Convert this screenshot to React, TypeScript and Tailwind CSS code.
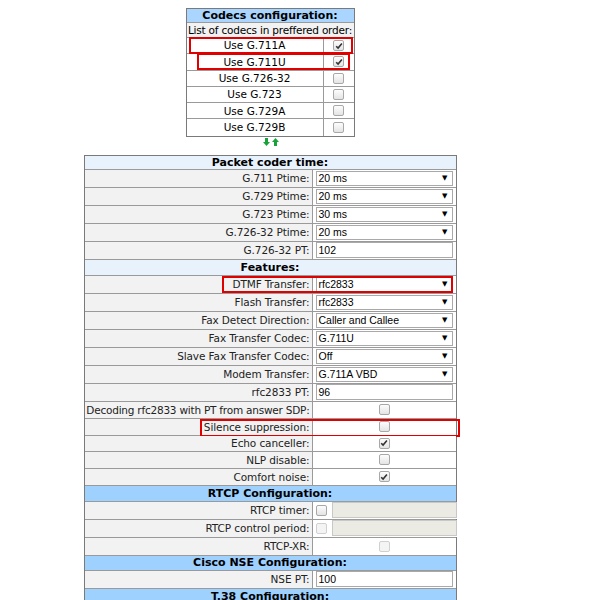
import React from "react";

const font = "font-['DejaVu_Sans','Liberation_Sans',sans-serif]";

function Check({ on, disabled }: { on?: boolean; disabled?: boolean }) {
  return (
    <span
      className={`inline-flex h-[11px] w-[11px] items-center justify-center rounded-[2px] border ${
        disabled ? "border-[#d0d0d0] bg-[#f4f4f4]" : "border-[#a8a8a8] bg-gradient-to-b from-[#fdfdfd] to-[#e4e4e4]"
      }`}
    >
      {on && (
        <svg width="8" height="8" viewBox="0 0 8 8">
          <path d="M1.2 4.2 L3.1 6.1 L6.9 1.6" stroke="#333" strokeWidth="1.6" fill="none" />
        </svg>
      )}
    </span>
  );
}

function Select({ value }: { value: string }) {
  return (
    <div className="flex h-[15px] w-[137px] items-center justify-between border border-[#a9a9a9] bg-white pl-[2px] pr-[4px] leading-none text-black">
      <span className="font-['Liberation_Sans',sans-serif] text-[10.5px]">{value}</span>
      <span className="text-[7px]">▼</span>
    </div>
  );
}

function TextBox({ value, disabled }: { value?: string; disabled?: boolean }) {
  return (
    <div
      className={`flex h-[16px] items-center border pl-[2px] font-['Liberation_Sans',sans-serif] text-[10.5px] leading-none ${
        disabled ? "w-[125px] border-[#c8c8c8] bg-[#ebebe4]" : "w-[137px] border-[#a9a9a9] bg-white"
      }`}
    >
      {value}
    </div>
  );
}

type Row =
  | { kind: "head"; text: string; dark?: boolean; h: string }
  | { kind: "select"; label: string; value: string; box?: string }
  | { kind: "text"; label: string; value: string }
  | { kind: "check"; label: string; on?: boolean; disabled?: boolean; box?: string; h?: string; tight?: boolean }
  | { kind: "checktext"; label: string; disabled?: boolean };

const rows: Row[] = [
  { kind: "head", text: "Packet coder time:", h: "h-[14px]" },
  { kind: "select", label: "G.711 Ptime:", value: "20 ms" },
  { kind: "select", label: "G.729 Ptime:", value: "20 ms" },
  { kind: "select", label: "G.723 Ptime:", value: "30 ms" },
  { kind: "select", label: "G.726-32 Ptime:", value: "20 ms" },
  { kind: "text", label: "G.726-32 PT:", value: "102" },
  { kind: "head", text: "Features:", h: "h-[16px]" },
  { kind: "select", label: "DTMF Transfer:", value: "rfc2833", box: "dtmf" },
  { kind: "select", label: "Flash Transfer:", value: "rfc2833" },
  { kind: "select", label: "Fax Detect Direction:", value: "Caller and Callee" },
  { kind: "select", label: "Fax Transfer Codec:", value: "G.711U" },
  { kind: "select", label: "Slave Fax Transfer Codec:", value: "Off" },
  { kind: "select", label: "Modem Transfer:", value: "G.711A VBD" },
  { kind: "text", label: "rfc2833 PT:", value: "96" },
  { kind: "check", label: "Decoding rfc2833 with PT from answer SDP:", tight: true },
  { kind: "check", label: "Silence suppression:", box: "silence" },
  { kind: "check", label: "Echo canceller:", on: true, h: "h-[16px]" },
  { kind: "check", label: "NLP disable:" },
  { kind: "check", label: "Comfort noise:", on: true },
  { kind: "head", text: "RTCP Configuration:", dark: true, h: "h-[16px]" },
  { kind: "checktext", label: "RTCP timer:" },
  { kind: "checktext", label: "RTCP control period:", disabled: true },
  { kind: "check", label: "RTCP-XR:", disabled: true, h: "h-[18px]" },
  { kind: "head", text: "Cisco NSE Configuration:", dark: true, h: "h-[15px]" },
  { kind: "text", label: "NSE PT:", value: "100" },
  { kind: "head", text: "T.38 Configuration:", dark: true, h: "h-[16px]" },
];

const codecs = [
  { name: "Use G.711A", on: true },
  { name: "Use G.711U", on: true },
  { name: "Use G.726-32" },
  { name: "Use G.723" },
  { name: "Use G.729A" },
  { name: "Use G.729B" },
];

function MainRow({ r }: { r: Row }) {
  if (r.kind === "head") {
    return (
      <div
        className={`flex ${r.h} items-center justify-center border-b border-[#9a9a9a] text-[11px] font-bold leading-none ${
          r.dark ? "bg-[#9fd1ff]" : "bg-[#e8f2fd]"
        }`}
      >
        {r.text}
      </div>
    );
  }
  const tall = r.kind === "select" || r.kind === "text" || r.kind === "checktext";
  const height = r.kind === "check" && r.h ? r.h : tall ? "h-[18px]" : "h-[17px]";
  const tight = r.kind === "check" && r.tight;
  return (
    <div className={`relative grid grid-cols-[227px_1fr] border-b border-[#9a9a9a] ${height}`}>
      <div
        className={`flex items-center justify-end whitespace-nowrap bg-[#f2f2f2] pr-[2px] text-[10.5px] leading-none text-[#222] ${
          tight ? "tracking-[-0.22px]" : "tracking-[-0.1px]"
        }`}
      >
        {r.label}
      </div>
      <div className="flex items-center border-l border-[#9a9a9a] bg-white pl-[3px]">
        {r.kind === "select" && <Select value={r.value} />}
        {r.kind === "text" && <TextBox value={r.value} />}
        {r.kind === "check" && (
          <div className="flex w-full justify-center pr-[3px]">
            <Check on={r.on} disabled={r.disabled} />
          </div>
        )}
        {r.kind === "checktext" && (
          <div className="flex items-center gap-[5px]">
            <Check disabled={r.disabled} />
            <TextBox disabled />
          </div>
        )}
      </div>
      {"box" in r && r.box === "dtmf" && (
        <div className="pointer-events-none absolute left-[137px] top-[0px] h-[17px] w-[231px] border-2 border-[#e00000]" />
      )}
      {"box" in r && r.box === "silence" && (
        <div className="pointer-events-none absolute left-[115px] top-[0px] h-[18px] w-[260px] border-2 border-[#e00000]" />
      )}
    </div>
  );
}

export default function App() {
  return (
    <div className={`${font} min-h-[600px] w-[600px] overflow-hidden bg-white text-black`}>
      <div className="flex w-[540px] flex-col items-center pt-[8px]">
        {/* Codecs table */}
        <div className="w-[169px] border border-[#7a7a7a]">
          <div className="flex h-[14px] items-center justify-center border-b border-[#9a9a9a] bg-[#a9d5ff] text-[11px] font-bold leading-none">
            Codecs configuration:
          </div>
          <div className="flex h-[15px] items-center justify-center whitespace-nowrap border-b border-[#9a9a9a] bg-[#f2f2f2] text-[10.5px] leading-none tracking-[-0.2px]">
            List of codecs in preffered order:
          </div>
          {codecs.map((c, i) => (
            <div
              key={c.name}
              className={`relative grid h-[16.3px] grid-cols-[136px_1fr] ${i < codecs.length - 1 ? "border-b border-[#9a9a9a]" : ""}`}
            >
              <div className="flex items-center justify-center text-[10.5px] leading-none">{c.name}</div>
              <div className="flex items-center justify-center border-l border-[#9a9a9a]">
                <Check on={c.on} />
              </div>
              {i === 0 && <div className="pointer-events-none absolute left-[2px] top-[-1px] h-[17px] w-[164px] border-2 border-[#e00000]" />}
              {i === 1 && <div className="pointer-events-none absolute left-[10px] top-[-1px] h-[17px] w-[153px] border-2 border-[#e00000]" />}
            </div>
          ))}
        </div>
        <div className="mt-[1px] flex h-[9px] items-center gap-[2px] pl-[2px]">
          <svg width="7" height="8" viewBox="0 0 7 8">
            <path d="M2 0 H5 V4 H7 L3.5 8 L0 4 H2 Z" fill="#17a339" />
          </svg>
          <svg width="7" height="8" viewBox="0 0 7 8">
            <path d="M2 8 H5 V4 H7 L3.5 0 L0 4 H2 Z" fill="#17a339" />
          </svg>
        </div>

        {/* Main table */}
        <div className="mt-[8px] w-[373px] border-l border-r border-t border-[#7a7a7a]">
          {rows.map((r, i) => (
            <MainRow key={i} r={r} />
          ))}
        </div>
      </div>
    </div>
  );
}
